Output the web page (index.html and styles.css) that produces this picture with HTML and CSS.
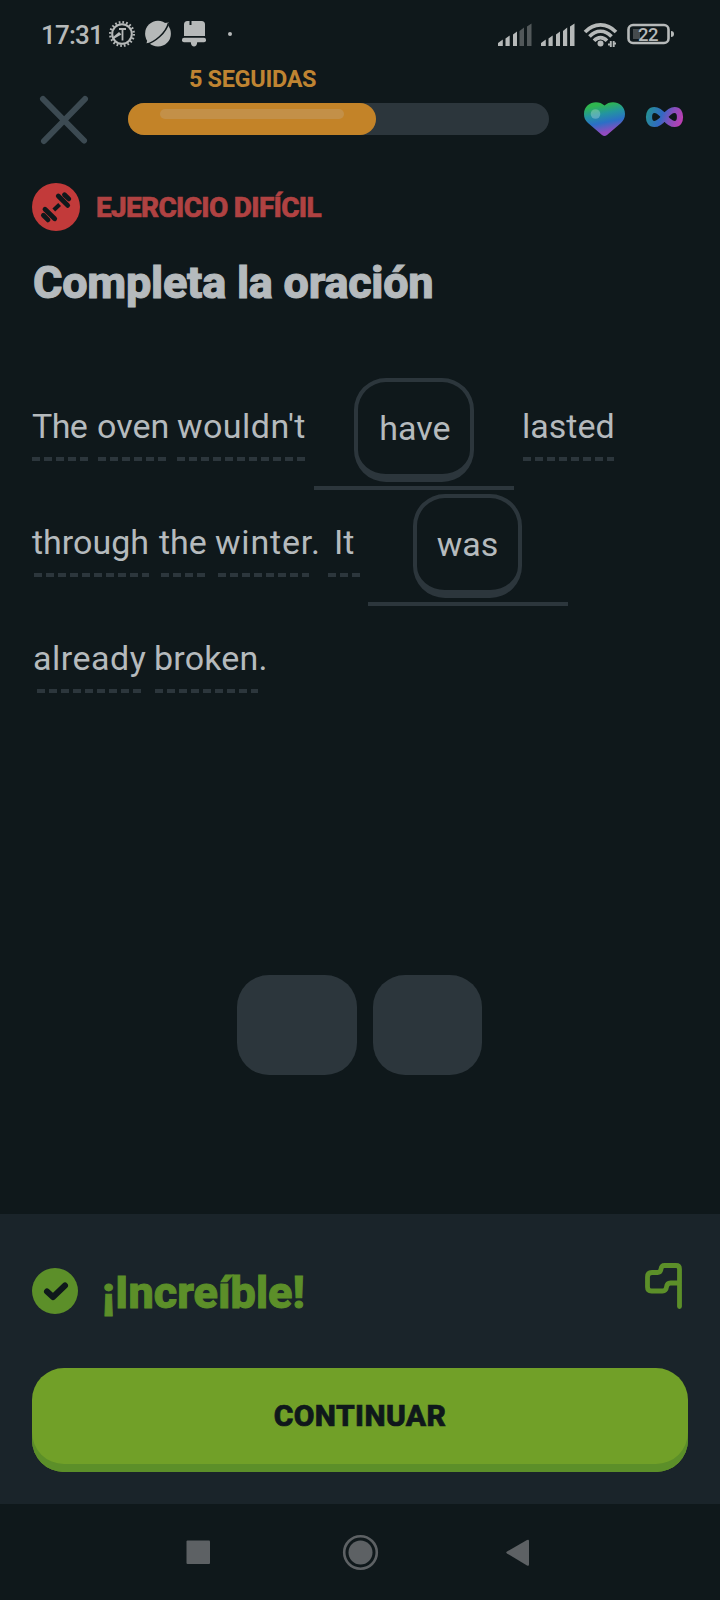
FILE: index.html
```html
<!DOCTYPE html>
<html lang="es">
<head>
<meta charset="utf-8">
<title>Completa la oración</title>
<link rel="stylesheet" href="styles.css">
</head>
<body>
<div class="screen">
  <div class="status">
    <span class="clock">17:31</span>
    <svg class="status-left" width="140" height="30" viewBox="106 18 140 30">
      <circle cx="122" cy="34" r="9.8" fill="none" stroke="#b6b9b9" stroke-width="2"/>
      <circle cx="122" cy="34" r="11.800" fill="none" stroke="#b6b9b9" stroke-width="2.4" stroke-dasharray="1.7 2.01"/>
      <path d="M119 29h7M122.500 29v11.500" fill="none" stroke="#b6b9b9" stroke-width="1.800"/>
      <path d="M112.500 37.500l6.500-5.500 2.500 2.500-8 4.500z" fill="#b6b9b9"/>
      <circle cx="158" cy="33.700" r="12.900" fill="#b6b9b9"/>
      <path d="M160 23.500l8.800-1-1.600 8z" fill="#b6b9b9"/>
      <path d="M146.500 43.500l3.800-.4-3-3z" fill="#b6b9b9"/>
      <path d="M146.500 44.300C155 42 166 33 168.500 23" fill="none" stroke="#0f181b" stroke-width="1.500"/>
      <path d="M184 36V24.500a3.500 3.500 0 0 1 3.500-3.500h2v4h2v-4h10a3.500 3.500 0 0 1 3.500 3.500V36z" fill="#b6b9b9"/>
      <rect x="182" y="37.700" width="24" height="4.600" rx="2" fill="#b6b9b9"/>
      <path d="M190.800 42h6.400c0 6-6.400 6-6.400 0z" fill="#b6b9b9"/>
      <circle cx="230" cy="34" r="2" fill="#b6b9b9"/>
    </svg>
    <svg class="status-right" width="182" height="30" viewBox="496 20 182 30">
      <g fill="#b6b9b9">
        <path d="M498 43l4.800-3.500V46H498zM505.500 38.500l4.200-3V46h-4.200zM513 34.500l4-3V46h-4z"/>
        <path d="M519.500 31l4.500-3.500V46h-4.500zM527 26.500l4.500-3V46H527z" opacity=".4"/>
        <path d="M541 43l4.800-3.500V46H541zM548.500 38.500l4.200-3V46h-4.200zM556 34.500l4-3V46h-4zM563 31l4.200-3.500V46H563zM570 26.500l4.500-3V46H570z"/>
        <circle cx="600.500" cy="43.500" r="3"/>
      </g>
      <g fill="none" stroke="#b6b9b9" stroke-width="3.600">
        <path d="M585 32c9-9.500 22-9.500 31 0M589.500 36.500c6.500-7 15.500-7 22 0M594 40.800c4-4.200 9-4.200 13 0"/>
        <path d="M610.800 41v6M613.700 41v6M608 44.500h2.500M614 43.500h2" stroke-width="1.900"/>
      </g>
      <rect x="628.500" y="25" width="40" height="18" rx="4.500" fill="none" stroke="#b6b9b9" stroke-width="2.600"/>
      <rect x="633" y="29" width="7" height="10" fill="#454b4d"/>
      <path d="M671 31q3 0 3 3t-3 3z" fill="#b6b9b9"/>
      <text x="648" y="40.500" text-anchor="middle" class="battery">22</text>
    </svg>
  </div>

  <header class="top">
    <svg class="close" width="52" height="52" viewBox="38 94 52 52">
      <path d="M43 99l41 41.500M85 99L44 141" stroke="#3c4a52" stroke-width="6" stroke-linecap="round"/>
    </svg>
    <div class="progress">
      <span class="streak">5 SEGUIDAS</span>
      <div class="track"><div class="fill"><div class="shine"></div></div></div>
    </div>
    <svg class="lives" width="106" height="40" viewBox="580 98 106 40">
      <defs>
        <linearGradient id="heart" x1=".35" y1="0" x2=".6" y2="1">
          <stop offset=".08" stop-color="#2fb64f"/><stop offset=".35" stop-color="#2394a0"/>
          <stop offset=".6" stop-color="#2b6fc6"/><stop offset=".88" stop-color="#914bbf"/>
        </linearGradient>
        <linearGradient id="loop" gradientUnits="userSpaceOnUse" x1="648" y1="110" x2="682" y2="122">
          <stop offset="0" stop-color="#258f95"/><stop offset=".4" stop-color="#3169c3"/>
          <stop offset=".65" stop-color="#8050bd"/><stop offset="1" stop-color="#bf3eb2"/>
        </linearGradient>
      </defs>
      <path d="M604.500 105.500C611 99 625 102 625 114c0 4-1.500 6.500-4 9l-14 12q-2.500 2-5 0l-14-12c-2.800-2.700-4-5-4-9 0-12 14-15 20.500-8.500z" fill="url(#heart)"/>
      <circle cx="595.500" cy="114" r="4.800" fill="#fff" opacity=".25"/>
      <path d="M664.500 117c-3.500-4.500-6.500-7-10.200-7-3.600 0-5.300 3-5.300 7s1.700 7 5.300 7c3.700 0 6.700-2.500 10.200-7s6.500-7 10.200-7c3.600 0 5.300 3 5.300 7s-1.700 7-5.300 7c-3.700 0-6.700-2.500-10.200-7z" fill="none" stroke="url(#loop)" stroke-width="6.200"/>
    </svg>
  </header>

  <main class="lesson">
    <div class="tag">
      <svg width="48" height="48" viewBox="32 183 48 48">
        <circle cx="56" cy="207" r="24" fill="#c23a3a"/>
        <g stroke="#0f181b" stroke-width="4.800" stroke-linecap="round">
          <path d="M58.300 196l9.400 9.400M64.500 194.700l4.300 4.200M45 209.200l9.700 9.500M43.400 215.200l4.600 4.700"/>
          <path d="M53.800 210l5.800-5.500" stroke-width="4" stroke-linecap="butt"/>
        </g>
      </svg>
      <span class="tag-label">EJERCICIO DIFÍCIL</span>
    </div>
    <h1 class="title">Completa la oración</h1>

    <div class="sentence">
      <div class="line">
        <span class="word the1">The</span>
        <span class="word oven">oven</span>
        <span class="word wouldnt">wouldn't</span>
        <span class="blank first"><span class="tile have">have</span></span>
        <span class="word lasted">lasted</span>
      </div>
      <div class="line">
        <span class="word through">through</span>
        <span class="word the2">the</span>
        <span class="word winter">winter.</span>
        <span class="word it">It</span>
        <span class="blank second"><span class="tile was">was</span></span>
      </div>
      <div class="line">
        <span class="word already">already</span>
        <span class="word broken">broken.</span>
      </div>
    </div>

    <div class="bank">
      <div class="slot wide"></div>
      <div class="slot narrow"></div>
    </div>
  </main>

  <section class="result">
    <div class="verdict">
      <svg width="46" height="46" viewBox="0 0 46 46">
        <circle cx="23" cy="23" r="23" fill="#5c8f29"/>
        <path d="M15 23.500l6 5.500 12-11.500" fill="none" stroke="#0f181b" stroke-width="6" stroke-linecap="round" stroke-linejoin="round"/>
      </svg>
      <span class="praise">¡Increíble!</span>
      <svg class="flag" width="40" height="48" viewBox="644 1262 40 48">
        <path d="M679.500 1306.500V1269q0-3.500-3.500-3.500h-11.500q-3 0-3.500 3.500t-3.500 3.500h-5.500q-4.500 0-4.500 4.500v10q0 4 4 4h11q3.500 0 4-4t4-4h9" fill="none" stroke="#5c8f29" stroke-width="4.800" stroke-linecap="round" stroke-linejoin="round"/>
      </svg>
    </div>
    <button class="continue">CONTINUAR</button>
  </section>

  <nav class="android">
    <svg width="400" height="40" viewBox="160 1532 400 40" fill="#5d6164">
      <rect x="186.500" y="1540.500" width="23.500" height="23.500" rx="1"/>
      <circle cx="360.500" cy="1552.500" r="12"/>
      <circle cx="360.500" cy="1552.500" r="16.300" fill="none" stroke="#5d6164" stroke-width="2.600"/>
      <path d="M507 1551.500l20-11.500q2-1 2 1v23.500q0 2-2 1l-20-12q-1.500-1 0-2z"/>
    </svg>
  </nav>
</div>
</body>
</html>
```
FILE: styles.css
```css
* { box-sizing: border-box; }

body {
  margin: 0;
  background: #0f181b;
  color: #b5babd;
  font-family: Roboto, "Noto Sans", sans-serif;
}

.screen {
  width: 720px;
  height: 1600px;
  display: flex;
  flex-direction: column;
  overflow: hidden;
}

.status {
  height: 68px;
  display: flex;
  align-items: flex-start;
  padding: 18px 42px 0 41px;
  color: #b6b9b9;
}

.clock {
  width: 65px;
  font-size: 26px;
  line-height: 34px;
  font-weight: 500;
  letter-spacing: -0.8px;
  white-space: nowrap;
}

.status-right { margin: 2px 0 0 auto; }

.battery {
  font-size: 18.5px;
  font-weight: 500;
  letter-spacing: -0.5px;
  fill: #b6b9b9;
}

.top {
  height: 92px;
  display: flex;
  align-items: flex-start;
  padding-left: 38px;
}

.close { margin-top: 26px; }

.progress {
  width: 421px;
  margin-left: 38px;
}

.streak {
  display: block;
  height: 35px;
  padding-left: 61px;
  font-size: 23.5px;
  line-height: 22px;
  font-weight: 700;
  color: #bf8432;
  letter-spacing: -0.35px;
}

.track {
  height: 32px;
  border-radius: 16px;
  background: #2c363c;
}

.fill {
  width: 248px;
  height: 32px;
  border-radius: 16px;
  background: #c38328;
  padding: 6px 32px;
}

.shine {
  height: 10px;
  border-radius: 5px;
  background: #c39048;
}

.lives { margin: 30px 0 0 31px; }

.lesson {
  height: 1054px;
  padding: 23px 32px 0;
}

.tag {
  display: flex;
  align-items: center;
  gap: 16px;
  height: 48px;
}

.tag-label {
  font-size: 28px;
  font-weight: 800;
  letter-spacing: -0.7px;
  color: #b04242;
  -webkit-text-stroke: 0.6px #b04242;
}

.title {
  margin: 25px 0 0 1px;
  height: 122px;
  font-size: 45px;
  line-height: 54px;
  font-weight: 800;
  letter-spacing: -0.25px;
  white-space: nowrap;
  -webkit-text-stroke: 1px #b5babd;
}

.line {
  display: flex;
  height: 116px;
}

.word {
  height: 83px;
  padding-top: 28px;
  font-size: 34px;
  line-height: 40px;
  white-space: nowrap;
  background: repeating-linear-gradient(90deg, #2c363c 0 8px, transparent 8px 12px) bottom / 100% 4px no-repeat;
}

.the1 { width: 56px; letter-spacing: -0.6px; }
.oven { width: 68px; margin-left: 10px; text-indent: -1px; }
.wouldnt { width: 128px; margin-left: 11px; letter-spacing: 0.45px; }
.lasted { width: 91px; margin-left: 9px; text-indent: -1px; }
.through { width: 115px; margin-left: 2px; text-indent: -2px; }
.the2 { width: 44px; margin-left: 12px; text-indent: -2px; }
.winter { width: 91px; margin-left: 13px; text-indent: -3px; letter-spacing: 0.8px; }
.it { width: 32px; margin-left: 19px; text-indent: 6px; }
.already { width: 104px; margin-left: 5px; text-indent: -4px; letter-spacing: 0.5px; }
.broken { width: 103px; margin-left: 14px; text-indent: -1px; letter-spacing: 0.2px; }

.blank {
  width: 200px;
  height: 112px;
  display: flex;
  justify-content: center;
  border-bottom: 4px solid #2c363c;
}

.first { margin-left: 9px; }
.second { margin-left: 8px; padding-right: 1px; }

.tile {
  height: 104px;
  border: 4px solid #2c363c;
  border-bottom-width: 8px;
  border-radius: 32px;
  font-size: 34px;
  line-height: 92px;
  text-align: center;
}

.have { width: 120px; padding-left: 2px; }
.was { width: 109px; }

.bank {
  display: flex;
  justify-content: center;
  gap: 16px;
  margin-top: 249px;
  padding-right: 1px;
}

.slot {
  height: 100px;
  border-radius: 32px;
  background: #2c363c;
}

.wide { width: 120px; }
.narrow { width: 109px; }

.result {
  height: 290px;
  padding: 48px 32px 0;
  background: #1a242a;
}

.verdict {
  height: 106px;
  display: flex;
  align-items: flex-start;
  padding-top: 6px;
}

.praise {
  margin: -2px 0 0 24px;
  font-size: 45px;
  line-height: 54px;
  font-weight: 800;
  color: #5c8f29;
  -webkit-text-stroke: 1px #5c8f29;
}

.flag { margin: -6px 4px 0 auto; }

.continue {
  display: block;
  width: 656px;
  height: 104px;
  margin: 0;
  padding: 0 0 8px;
  border: 0;
  border-radius: 32px;
  background: #71a028;
  box-shadow: inset 0 -8px #5c8f29;
  color: #0f181b;
  font: 800 30px/94px Roboto, sans-serif;
  letter-spacing: 0.4px;
  -webkit-text-stroke: 0.7px #0f181b;
}

.android {
  height: 96px;
  padding: 28px 160px 0;
}
```
